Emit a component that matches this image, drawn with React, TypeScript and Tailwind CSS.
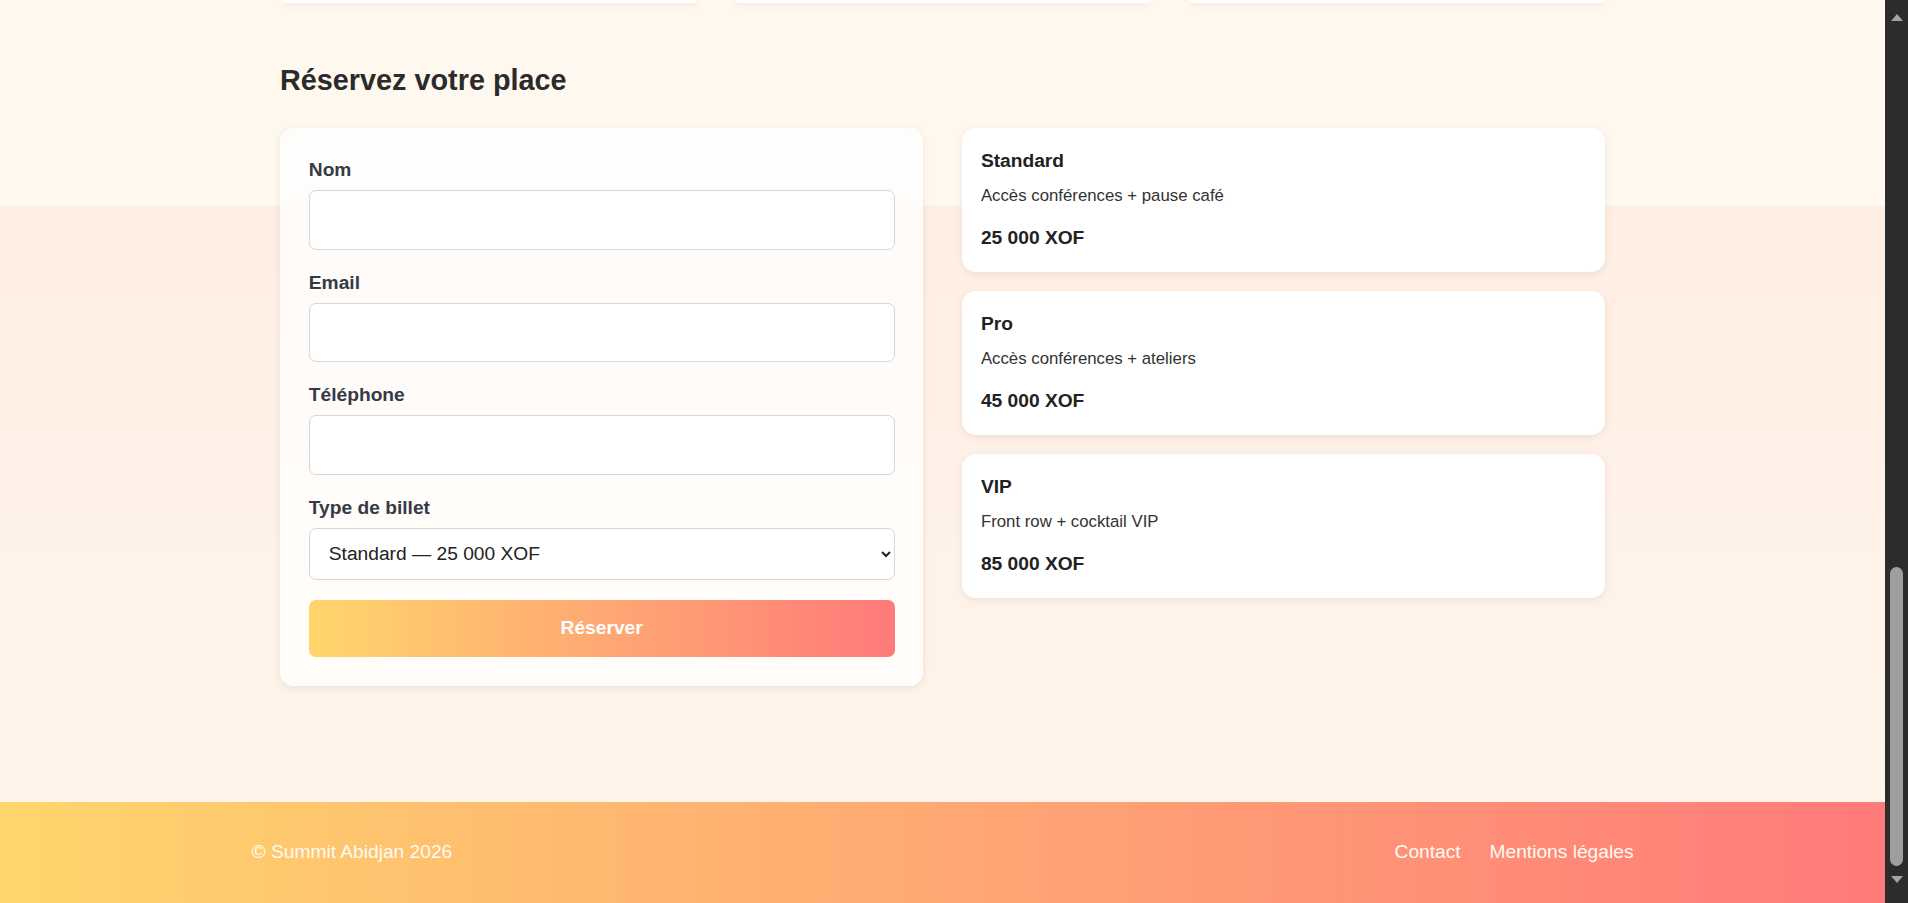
import { useState } from 'react';

const tickets = [
  { name: 'Standard', desc: 'Accès conférences + pause café', price: '25 000 XOF' },
  { name: 'Pro', desc: 'Accès conférences + ateliers', price: '45 000 XOF' },
  { name: 'VIP', desc: 'Front row + cocktail VIP', price: '85 000 XOF' },
];

const font = { fontFamily: '"Liberation Sans", Arial, sans-serif' };

function Field({ label, type = 'text' }: { label: string; type?: string }) {
  return (
    <div>
      <label className="mb-[5px] block text-[19.2px] font-bold leading-[1.5] text-[#343a46]">{label}</label>
      <input
        type={type}
        className="block h-[59.5px] w-full rounded-[7px] border border-[#d6d6d6] bg-white px-[14px] text-[19.2px] text-[#222] outline-none"
      />
    </div>
  );
}

function Scrollbar() {
  return (
    <div className="flex w-[23px] shrink-0 flex-col items-center bg-[#2c2c2c]">
      <div className="mt-[14px] h-0 w-0 border-x-[6px] border-b-[7px] border-x-transparent border-b-[#a3a3a3]" />
      <div className="mt-[546px] h-[299px] w-[13px] rounded-[7px] bg-[#9e9e9e]" />
      <div className="mt-[10px] h-0 w-0 border-x-[6px] border-t-[7px] border-x-transparent border-t-[#a3a3a3]" />
    </div>
  );
}

export default function App() {
  const [ticket, setTicket] = useState('Standard');

  return (
    <div className="flex h-[903px] w-full overflow-hidden" style={font}>
      <div className="flex min-w-0 flex-1 flex-col bg-[linear-gradient(180deg,#fff8ef_0px,#fff8ef_206px,#ffeee4_206px,#fff6ec_100%)]">
        {/* bottom of the previous section's cards */}
        <div className="mx-auto grid w-full max-w-[1325px] grid-cols-3 gap-[38.4px] pl-[2px]">
          <div className="h-[3px] rounded-b-[14px] bg-white shadow-[0_2px_6px_rgba(0,0,0,0.1)]" />
          <div className="h-[3px] rounded-b-[14px] bg-white shadow-[0_2px_6px_rgba(0,0,0,0.1)]" />
          <div className="h-[3px] rounded-b-[14px] bg-white shadow-[0_2px_6px_rgba(0,0,0,0.1)]" />
        </div>

        <section className="mx-auto w-full max-w-[1325px] flex-1 pt-[60px]">
          <h2 className="mb-[30px] text-[28.8px] font-bold leading-[1.2] text-[#2b2b2b]">Réservez votre place</h2>

          <div className="grid grid-cols-2 items-start gap-[38.4px]">
            <form
              onSubmit={(e) => e.preventDefault()}
              className="flex flex-col gap-[19.2px] rounded-[14px] bg-white/75 p-[28.8px] shadow-[0_2px_8px_rgba(0,0,0,0.08)]"
            >
              <Field label="Nom" />
              <Field label="Email" type="email" />
              <Field label="Téléphone" type="tel" />
              <div>
                <label className="mb-[5px] block text-[19.2px] font-bold leading-[1.5] text-[#343a46]">Type de billet</label>
                <select
                  value={ticket}
                  onChange={(e) => setTicket(e.target.value)}
                  className="block h-[52.8px] w-full rounded-[7px] border border-[#d6d6d6] bg-white pl-[15px] pr-[8px] text-[19.2px] text-[#222]"
                >
                  {tickets.map((t) => (
                    <option key={t.name} value={t.name}>
                      {t.name} — {t.price}
                    </option>
                  ))}
                </select>
              </div>
              <button
                type="submit"
                className="h-[57.6px] w-full rounded-[7px] bg-[linear-gradient(90deg,#ffd66c,#ff7a7a)] text-[19.2px] font-bold text-white"
              >
                Réserver
              </button>
            </form>

            <div className="flex flex-col gap-[19.2px]">
              {tickets.map((t) => (
                <div key={t.name} className="h-[144px] rounded-[14px] bg-white p-[19.2px] shadow-[0_2px_8px_rgba(0,0,0,0.08)]">
                  <h3 className="mb-[7.2px] text-[19.2px] font-bold leading-[1.5] text-[#222]">{t.name}</h3>
                  <p className="mb-[15.6px] text-[16.8px] leading-[1.5] text-[#333]">{t.desc}</p>
                  <p className="text-[19.2px] font-bold leading-[1.5] text-[#222]">{t.price}</p>
                </div>
              ))}
            </div>
          </div>
        </section>

        <footer className="h-[101px] shrink-0 bg-[linear-gradient(90deg,#ffd66c,#ff7a7a)]">
          <div className="mx-auto flex h-full max-w-[1382px] items-center justify-between text-[19.2px] leading-[1.5] text-[#fffaf2]">
            <span>© Summit Abidjan 2026</span>
            <nav className="flex gap-[28.8px]">
              <a href="#">Contact</a>
              <a href="#">Mentions légales</a>
            </nav>
          </div>
        </footer>
      </div>
      <Scrollbar />
    </div>
  );
}
